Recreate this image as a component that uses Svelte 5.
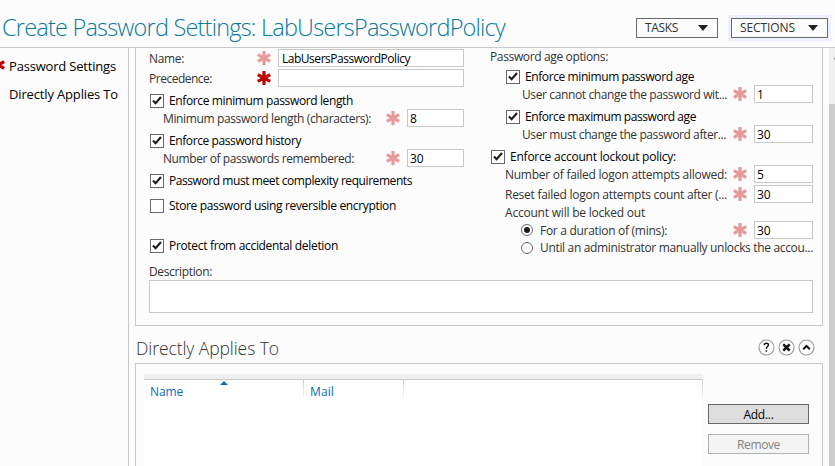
<script>
  // Spreads a label's glyphs evenly so that it occupies the given width.
  function fit(node, width) {
    node.style.letterSpacing = '0px';
    const natural = node.getBoundingClientRect().width;
    const count = node.textContent.length;
    node.style.letterSpacing = (width - natural) / count + 'px';
  }

  const left = [
    { kind: 'field', label: 'Name:', w: 35, value: 'LabUsersPasswordPolicy', vw: 128, wide: true },
    { kind: 'field', label: 'Precedence:', w: 63, value: '', wide: true, strong: true },
    { kind: 'check', label: 'Enforce minimum password length', w: 184, on: true, gap: 5 },
    { kind: 'field', label: 'Minimum password length (characters):', w: 208, value: '8', indent: 14 },
    { kind: 'check', label: 'Enforce password history', w: 132, on: true, gap: 5 },
    { kind: 'field', label: 'Number of passwords remembered:', w: 191, value: '30', indent: 14 },
    { kind: 'check', label: 'Password must meet complexity requirements', w: 243, on: true, gap: 5 },
    { kind: 'check', label: 'Store password using reversible encryption', w: 227, on: false, gap: 10 },
    { kind: 'check', label: 'Protect from accidental deletion', w: 169, on: true, gap: 25 }
  ];

  const right = [
    { kind: 'text', label: 'Password age options:', w: 118, h: 18 },
    { kind: 'check', label: 'Enforce minimum password age', w: 169, on: true, gap: 3, indent: 15 },
    { kind: 'field', label: 'User cannot change the password wit...', w: 205, value: '1', indent: 32 },
    { kind: 'check', label: 'Enforce maximum password age', w: 171, on: true, gap: 5, indent: 15 },
    { kind: 'field', label: 'User must change the password after...', w: 204, value: '30', indent: 32 },
    { kind: 'check', label: 'Enforce account lockout policy:', w: 166, on: true, gap: 5 },
    { kind: 'field', label: 'Number of failed logon attempts allowed:', w: 222, value: '5', indent: 15 },
    { kind: 'field', label: 'Reset failed logon attempts count after (...', w: 222, value: '30', indent: 15 },
    { kind: 'text', label: 'Account will be locked out', w: 140, h: 17, indent: 15 },
    { kind: 'field', label: 'For a duration of (mins):', w: 127, value: '30', indent: 30, radio: true, on: true, gap: -1 },
    { kind: 'radio', label: 'Until an administrator manually unlocks the accou...', w: 273, indent: 30 }
  ];
</script>

{#snippet star(strong)}
  <svg class="star" class:strong width="14" height="14" viewBox="0 0 14 14">
    <path d="M7 0V14M0.8 3.6L13.2 10.4M13.2 3.6L0.8 10.4" />
  </svg>
{/snippet}

{#snippet rows(list)}
  {#each list as r}
    <div class="row {r.kind}" style:margin-top="{r.gap ?? 0}px" style:padding-left="{r.indent ?? 0}px" style:height={r.h ? r.h + 'px' : null}>
      {#if r.kind === 'check'}
        <span class="box">
          {#if r.on}
            <svg width="12" height="11" viewBox="0 0 12 11"><path d="M2 5.6L4.6 8.3L10 2" /></svg>
          {/if}
        </span>
      {/if}
      {#if r.kind === 'radio' || r.radio}
        <span class="dot" class:on={r.on}></span>
      {/if}
      <span class="label" use:fit={r.w}>{r.label}</span>
      {#if r.kind === 'field'}
        <span class="entry">
          {@render star(r.strong)}
          <span class="input" class:wide={r.wide}>{#if r.vw}<span use:fit={r.vw}>{r.value}</span>{:else}{r.value}{/if}</span>
        </span>
      {/if}
    </div>
  {/each}
{/snippet}

<div class="window">
  <header>
    <h1><span use:fit={503}>Create Password Settings: LabUsersPasswordPolicy</span></h1>
    <div class="menu tasks"><span use:fit={33}>TASKS</span><i></i></div>
    <div class="menu sections"><span use:fit={55}>SECTIONS</span><i></i></div>
  </header>
  <div class="body">
    <nav>
      <div class="item"><span class="mark">{@render star(true)}</span><span use:fit={107}>Password Settings</span></div>
      <div class="item"><span use:fit={109}>Directly Applies To</span></div>
    </nav>
    <main>
      <section class="settings">
        <div class="cols">
          <div class="col first">{@render rows(left)}</div>
          <div class="col second">{@render rows(right)}</div>
        </div>
        <div class="desc"><span use:fit={63}>Description:</span></div>
        <div class="area"></div>
      </section>
      <div class="heading">
        <h2><span use:fit={143}>Directly Applies To</span></h2>
        <div class="tools">
          <svg width="17" height="17" viewBox="0 0 17 17"><circle cx="8.5" cy="8.5" r="7.5" /><path class="q" d="M6.3 6.2C6.4 3.5 10.6 3.7 10.4 6C10.3 7.5 8.4 7.8 8.4 9.7M8.4 11.2V12.8" /></svg>
          <svg width="17" height="17" viewBox="0 0 17 17"><circle cx="8.5" cy="8.5" r="7.5" /><path class="x" d="M5.3 5.3L11.7 11.7M11.7 5.3L5.3 11.7" /></svg>
          <svg width="17" height="17" viewBox="0 0 17 17"><circle cx="8.5" cy="8.5" r="7.5" /><path class="u" d="M5.2 10.2L8.5 7L11.8 10.2" /></svg>
        </div>
      </div>
      <section class="applies">
        <div class="table">
          <div class="band"></div>
          <div class="head">
            <div class="th name"><span use:fit={33}>Name</span><svg class="sort" width="8" height="4" viewBox="0 0 8 4"><path d="M4 0L8 4H0Z" /></svg></div>
            <div class="th mail"><span use:fit={24}>Mail</span></div>
            <div class="th rest"></div>
          </div>
        </div>
        <div class="actions">
          <div class="btn"><span use:fit={30}>Add...</span></div>
          <div class="btn off"><span use:fit={43}>Remove</span></div>
        </div>
      </section>
    </main>
    <aside>
      <div class="track"><svg width="6" height="6" viewBox="0 0 6 6"><path d="M4.5 4.5L6 1.5V4.5Z" /></svg></div>
      <div class="thumb"></div>
    </aside>
  </div>
</div>

<style>
  :global(body) { margin: 0; overflow: hidden; }
  .window {
    width: 835px; height: 466px; overflow: hidden;
    display: flex; flex-direction: column;
    background: #fcfcfc; color: #000;
    font: 12px/16px "Open Sans", "Noto Sans", sans-serif;
    white-space: nowrap;
  }
  .window * { box-sizing: border-box; }
  h1, h2 { margin: 0; font-weight: 300; }
  header {
    height: 48px; flex: none; display: flex; align-items: flex-start;
    border-bottom: 1px solid #c8c8c8; padding-left: 2px;
  }
  h1 { font-size: 23.5px; line-height: 32px; padding-top: 11px; color: #087a9e; width: 634px; }
  .menu {
    margin-top: 18px; height: 20px; border: 1px solid #686868; background: #fcfcfc;
    display: flex; align-items: center; justify-content: space-between;
    padding: 0 9px 0 8px; color: #333; flex: none;
  }
  .tasks { width: 82px; }
  .sections { width: 97px; margin-left: 13px; box-shadow: 0 0 0 3px #edf1fd; }
  .menu i { border: 5px solid transparent; border-top: 6px solid #222; border-bottom: 0; }
  .body { flex: 1; display: flex; min-height: 0; }
  nav { width: 129px; flex: none; border-right: 1px solid #c8c8c8; padding: 4px 0 0 9px; overflow: hidden; }
  .item { height: 28px; display: flex; align-items: center; font-size: 13px; position: relative; }
  .mark { position: absolute; left: -18px; top: 6px; height: 14px; }
  main { width: 694px; flex: none; padding-left: 6px; }
  .settings { height: 278px; border: 1px solid #c8c8c8; border-top: 0; padding: 0 9px 0 13px; }
  .cols { display: flex; height: 215px; }
  .first { width: 315px; }
  .second { width: 323px; margin-left: 26px; }
  .second .text { padding-left: 1px; }
  .row { display: flex; align-items: center; height: 20px; color: #333; }
  .row.check { height: 15px; color: #000; }
  .row.radio { height: 15px; }
  .label { flex: none; }
  .field .label { padding-top: 1px; }
  .entry { margin-left: auto; display: flex; align-items: center; gap: 7px; }
  .box {
    width: 14px; height: 14px; margin: 0 5px 0 1px; border: 1px solid #686868; background: #fff;
    display: flex; flex: none;
  }
  .box path { fill: none; stroke: #1c1c1c; stroke-width: 2.1; }
  .dot {
    width: 12px; height: 12px; border: 1px solid #686868; border-radius: 50%; margin: 0 7px 0 1px;
    background: #fff; flex: none; display: flex; align-items: center; justify-content: center;
  }
  .dot.on::after { content: ""; width: 6px; height: 6px; border-radius: 50%; background: #1c1c1c; }
  .star { display: block; flex: none; }
  .star path { stroke: #e69a9a; stroke-width: 3.2; fill: none; }
  .star.strong path { stroke: #c00000; }
  .input {
    width: 57px; height: 18px; border: 1px solid #c8c8c8; background: #fff; color: #000;
    padding-left: 2px; line-height: 18px;
  }
  .second .input { width: 59px; }
  .input.wide { width: 186px; padding-left: 3px; }
  .desc { height: 17px; line-height: 18px; color: #333; }
  .area { height: 33px; border: 1px solid #c8c8c8; background: #fff; width: 664px; }
  .heading { height: 37px; display: flex; align-items: flex-start; justify-content: space-between; padding-right: 8px; }
  h2 { font-size: 17.5px; line-height: 24px; padding: 10px 0 0 1px; font-weight: 300; color: #333; }
  .tools { display: flex; gap: 3px; padding-top: 13px; }
  .tools circle { fill: #fff; stroke: #9a9a9a; stroke-width: 1.1; }
  .tools path { fill: none; stroke: #111; }
  .tools .q { stroke-width: 1.5; }
  .tools .x { stroke-width: 2.5; }
  .tools .u { stroke-width: 2; }
  .applies { border: 1px solid #c8c8c8; height: 110px; display: flex; padding: 10px 0 0 8px; }
  .table { width: 559px; background: #fff; flex: none; }
  .band { height: 6px; background: #efefef; border-bottom: 1px solid #c8c8c8; }
  .head { display: flex; height: 20px; color: #0a6cb4; }
  .th { border-right: 1px solid; border-image: linear-gradient(#c8c8c8, #fff) 1; padding: 4px 0 0 6px; position: relative; }
  .name { width: 160px; }
  .mail { width: 100px; }
  .rest { flex: 1; }
  .sort { position: absolute; left: 76px; top: 1px; fill: #0a6cb4; }
  .actions { padding: 30px 0 0 5px; display: flex; flex-direction: column; gap: 10px; }
  .btn {
    width: 101px; height: 20px; border: 1px solid #686868; background: #dddddd; padding-top: 1px;
    display: flex; align-items: center; justify-content: center;
  }
  .btn.off { border-color: #adb2b5; background: #f4f4f4; color: #838383; }
  aside { width: 6px; margin-left: 6px; flex: none; display: flex; flex-direction: column; }
  .track { height: 56px; background: #f0f0f0; padding-top: 7px; }
  .track svg { display: block; fill: #888; }
  .thumb { flex: 1; background: #cdcdcd; }
</style>
